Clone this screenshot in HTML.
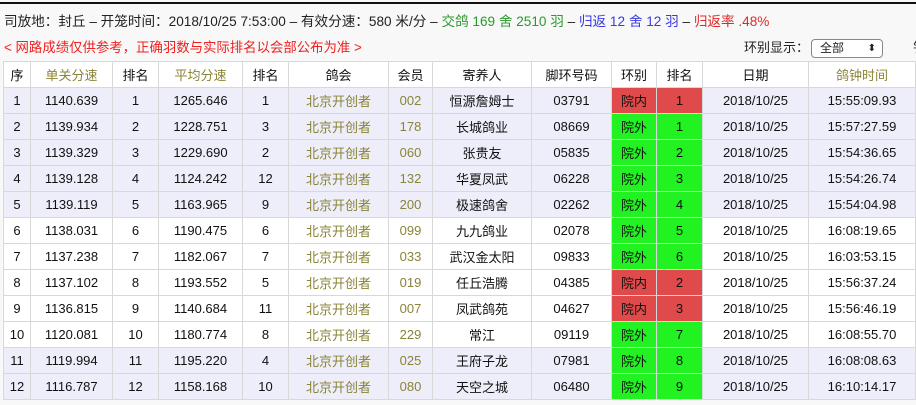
<!DOCTYPE html>
<html><head><meta charset="utf-8"><style>
body{margin:0;width:916px;height:405px;background:#f8f8f8;font-family:"Liberation Sans","Noto Sans CJK SC",sans-serif;overflow:hidden;position:relative}
.line{position:absolute;left:0;top:2px;width:916px;height:2px;background:#111}
.t1{position:absolute;left:4px;top:10px;font-size:13.6px;color:#222;white-space:nowrap}
.t2{position:absolute;left:4px;top:36px;font-size:13.4px;color:#f02020;white-space:nowrap}
.sel{position:absolute;left:744px;top:37px;font-size:13px;color:#222;white-space:nowrap}
.box{display:inline-block;width:62px;height:17px;border:1px solid #888;border-radius:4px;background:#fff;vertical-align:middle;position:relative;font-size:12px;line-height:17px;padding-left:8px;box-sizing:content-box;margin-left:2px}
.box:after{content:"\2B0D";position:absolute;right:6px;top:0;font-size:10px}
.g{color:#2a9a2a}.b{color:#3a3ae0}.r{color:#e02828}
table{position:absolute;left:3px;top:61px;border-collapse:collapse;font-size:13px;color:#111}
td,th{border:1px solid #d8d8d8;height:25px;padding:0;text-align:center;font-weight:normal}
th{background:#fff}
tr.l td{background:#eeeefa}tr.w td{background:#fff}
.o{color:#8a8436}
td.rd{background:#e04a4a!important}td.gr{background:#22f222!important}
</style></head><body>
<div class="line"></div>
<div class="t1">司放地：封丘 – 开笼时间：2018/10/25 7:53:00 – 有效分速：580 米/分 – <span class="g">交鸽 169 舍 2510 羽</span> – <span class="b">归返 12 舍 12 羽</span> – <span class="r">归返率 .48%</span></div>
<div class="t2">&lt; 网路成绩仅供参考，正确羽数与实际排名以会部公布为准 &gt;</div>
<div class="sel">环别显示：<span class="box">全部</span><span style="margin-left:30px">钅</span></div>
<table>
<colgroup><col style="width:27px"><col style="width:82px"><col style="width:46px"><col style="width:84px"><col style="width:46px"><col style="width:100px"><col style="width:44px"><col style="width:99px"><col style="width:80px"><col style="width:45px"><col style="width:46px"><col style="width:106px"><col style="width:107px"></colgroup>
<tr><th>序</th><th class="o">单关分速</th><th>排名</th><th class="o">平均分速</th><th>排名</th><th>鸽会</th><th>会员</th><th>寄养人</th><th>脚环号码</th><th>环别</th><th>排名</th><th>日期</th><th class="o">鸽钟时间</th></tr>
<tr class="l"><td>1</td><td>1140.639</td><td>1</td><td>1265.646</td><td>1</td><td class="o">北京开创者</td><td class="o">002</td><td>恒源詹姆士</td><td>03791</td><td class="rd">院内</td><td class="rd">1</td><td>2018/10/25</td><td>15:55:09.93</td></tr>
<tr class="l"><td>2</td><td>1139.934</td><td>2</td><td>1228.751</td><td>3</td><td class="o">北京开创者</td><td class="o">178</td><td>长城鸽业</td><td>08669</td><td class="gr">院外</td><td class="gr">1</td><td>2018/10/25</td><td>15:57:27.59</td></tr>
<tr class="l"><td>3</td><td>1139.329</td><td>3</td><td>1229.690</td><td>2</td><td class="o">北京开创者</td><td class="o">060</td><td>张贵友</td><td>05835</td><td class="gr">院外</td><td class="gr">2</td><td>2018/10/25</td><td>15:54:36.65</td></tr>
<tr class="l"><td>4</td><td>1139.128</td><td>4</td><td>1124.242</td><td>12</td><td class="o">北京开创者</td><td class="o">132</td><td>华夏凤武</td><td>06228</td><td class="gr">院外</td><td class="gr">3</td><td>2018/10/25</td><td>15:54:26.74</td></tr>
<tr class="l"><td>5</td><td>1139.119</td><td>5</td><td>1163.965</td><td>9</td><td class="o">北京开创者</td><td class="o">200</td><td>极速鸽舍</td><td>02262</td><td class="gr">院外</td><td class="gr">4</td><td>2018/10/25</td><td>15:54:04.98</td></tr>
<tr class="w"><td>6</td><td>1138.031</td><td>6</td><td>1190.475</td><td>6</td><td class="o">北京开创者</td><td class="o">099</td><td>九九鸽业</td><td>02078</td><td class="gr">院外</td><td class="gr">5</td><td>2018/10/25</td><td>16:08:19.65</td></tr>
<tr class="w"><td>7</td><td>1137.238</td><td>7</td><td>1182.067</td><td>7</td><td class="o">北京开创者</td><td class="o">033</td><td>武汉金太阳</td><td>09833</td><td class="gr">院外</td><td class="gr">6</td><td>2018/10/25</td><td>16:03:53.15</td></tr>
<tr class="w"><td>8</td><td>1137.102</td><td>8</td><td>1193.552</td><td>5</td><td class="o">北京开创者</td><td class="o">019</td><td>任丘浩腾</td><td>04385</td><td class="rd">院内</td><td class="rd">2</td><td>2018/10/25</td><td>15:56:37.24</td></tr>
<tr class="w"><td>9</td><td>1136.815</td><td>9</td><td>1140.684</td><td>11</td><td class="o">北京开创者</td><td class="o">007</td><td>凤武鸽苑</td><td>04627</td><td class="rd">院内</td><td class="rd">3</td><td>2018/10/25</td><td>15:56:46.19</td></tr>
<tr class="w"><td>10</td><td>1120.081</td><td>10</td><td>1180.774</td><td>8</td><td class="o">北京开创者</td><td class="o">229</td><td>常江</td><td>09119</td><td class="gr">院外</td><td class="gr">7</td><td>2018/10/25</td><td>16:08:55.70</td></tr>
<tr class="l"><td>11</td><td>1119.994</td><td>11</td><td>1195.220</td><td>4</td><td class="o">北京开创者</td><td class="o">025</td><td>王府子龙</td><td>07981</td><td class="gr">院外</td><td class="gr">8</td><td>2018/10/25</td><td>16:08:08.63</td></tr>
<tr class="l"><td>12</td><td>1116.787</td><td>12</td><td>1158.168</td><td>10</td><td class="o">北京开创者</td><td class="o">080</td><td>天空之城</td><td>06480</td><td class="gr">院外</td><td class="gr">9</td><td>2018/10/25</td><td>16:10:14.17</td></tr>
</table>
</body></html>
